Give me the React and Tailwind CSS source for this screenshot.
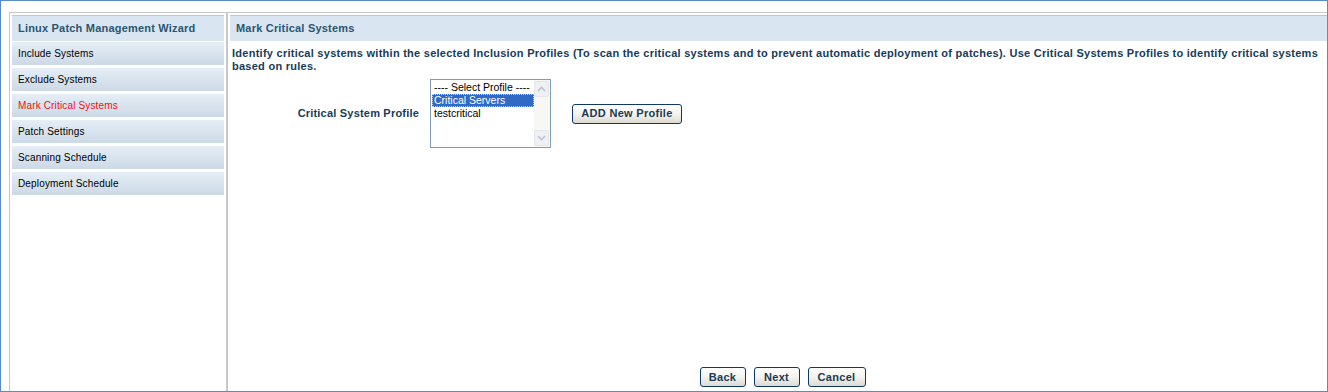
import React from 'react';

const steps = [
  'Include Systems',
  'Exclude Systems',
  'Mark Critical Systems',
  'Patch Settings',
  'Scanning Schedule',
  'Deployment Schedule',
];

const profiles = ['---- Select Profile ----', 'Critical Servers', 'testcritical'];

const font = "font-['Liberation_Sans',Arial,sans-serif]";

const WizButton = ({ children, className = '' }) => (
  <button
    className={`h-[20px] rounded-[3px] border border-[#0b3a6a] bg-gradient-to-b from-white via-[#f4f3ee] to-[#dcdad0] text-[11px] font-bold tracking-[0.3px] text-[#1a3a55] ${className}`}
  >
    {children}
  </button>
);

const Chevron = ({ up }) => (
  <svg width="9" height="6" viewBox="0 0 9 6">
    <path
      d={up ? 'M1 5 L4.5 1.5 L8 5' : 'M1 1 L4.5 4.5 L8 1'}
      fill="none"
      stroke="#b8c3cf"
      strokeWidth="1.6"
    />
  </svg>
);

export default function App() {
  return (
    <div className={`w-[1328px] h-[392px] bg-white border border-[#5a8cc4] pl-[8px] pt-[11px] flex ${font}`}>
      <div className="flex flex-1 border-t border-[#c8c8c8]">
        {/* Sidebar */}
        <div className="w-[219px] border-l border-r-2 border-[#c8c8c8] px-[2px] pt-[2px] flex flex-col gap-[1px]">
          <div className="h-[26px] bg-[#dae5f2] border-t border-[#b7c8da] flex items-center pl-[6px]">
            <span className="text-[11px] font-bold tracking-[0.2px] text-[#2a5670]">Linux Patch Management Wizard</span>
          </div>
          <div className="flex flex-col gap-[3px]">
            {steps.map((s) => (
              <div
                key={s}
                className="h-[23px] bg-gradient-to-b from-[#e6eef6] to-[#ccd9e6] flex items-center pl-[6px]"
              >
                <span
                  className={`text-[10px] tracking-[0.15px] ${
                    s === 'Mark Critical Systems' ? 'text-[#f01010]' : 'text-black'
                  }`}
                >
                  {s}
                </span>
              </div>
            ))}
          </div>
        </div>

        {/* Main */}
        <div className="flex-1 flex flex-col pt-[2px] pb-[4px]">
          <div className="h-[26px] ml-[2px] bg-[#dae5f2] border-t border-[#b7c8da] flex items-center pl-[6px]">
            <span className="text-[11px] font-bold tracking-[0.2px] text-[#2a5670]">Mark Critical Systems</span>
          </div>
          <p className="pl-[4px] pr-[2px] pt-[6px] text-[11px] leading-[13px] font-bold tracking-[0.26px] text-[#163c58]">
            Identify critical systems within the selected Inclusion Profiles (To scan the critical systems and to prevent automatic deployment of patches). Use Critical Systems Profiles to identify critical systems based on rules.
          </p>

          <div className="flex items-center mt-[6px]">
            <div className="w-[191px] text-right text-[11px] font-bold tracking-[0.2px] text-[#163c58]">Critical System Profile</div>
            <div className="ml-[11px] w-[121px] h-[69px] border border-[#7f9db9] bg-white flex">
              <div className="flex-1 pt-[1px] pl-[1px]">
                {profiles.map((p, i) => (
                  <div
                    key={p}
                    className={`h-[13px] leading-[13px] text-[10.5px] pl-[2px] ${
                      i === 1
                        ? 'bg-[#316ac5] text-white outline-1 outline-dotted outline-offset-[-1px] outline-[#c8d8f0]'
                        : 'text-black'
                    }`}
                  >
                    {p}
                  </div>
                ))}
              </div>
              <div className="w-[16px] flex flex-col bg-[#f7f7f3] py-[1px] pr-[1px]">
                <div className="h-[16px] rounded-[2px] border border-[#e4e6ea] bg-[#eef0f4] flex items-center justify-center">
                  <Chevron up />
                </div>
                <div className="flex-1" />
                <div className="h-[16px] rounded-[2px] border border-[#e4e6ea] bg-[#eef0f4] flex items-center justify-center">
                  <Chevron />
                </div>
              </div>
            </div>
            <WizButton className="ml-[21px] w-[110px]">ADD New Profile</WizButton>
          </div>

          <div className="flex-1" />
          <div className="flex justify-center gap-[8px] pl-[10px]">
            <WizButton className="w-[46px]">Back</WizButton>
            <WizButton className="w-[46px]">Next</WizButton>
            <WizButton className="w-[58px]">Cancel</WizButton>
          </div>
        </div>
      </div>
    </div>
  );
}
